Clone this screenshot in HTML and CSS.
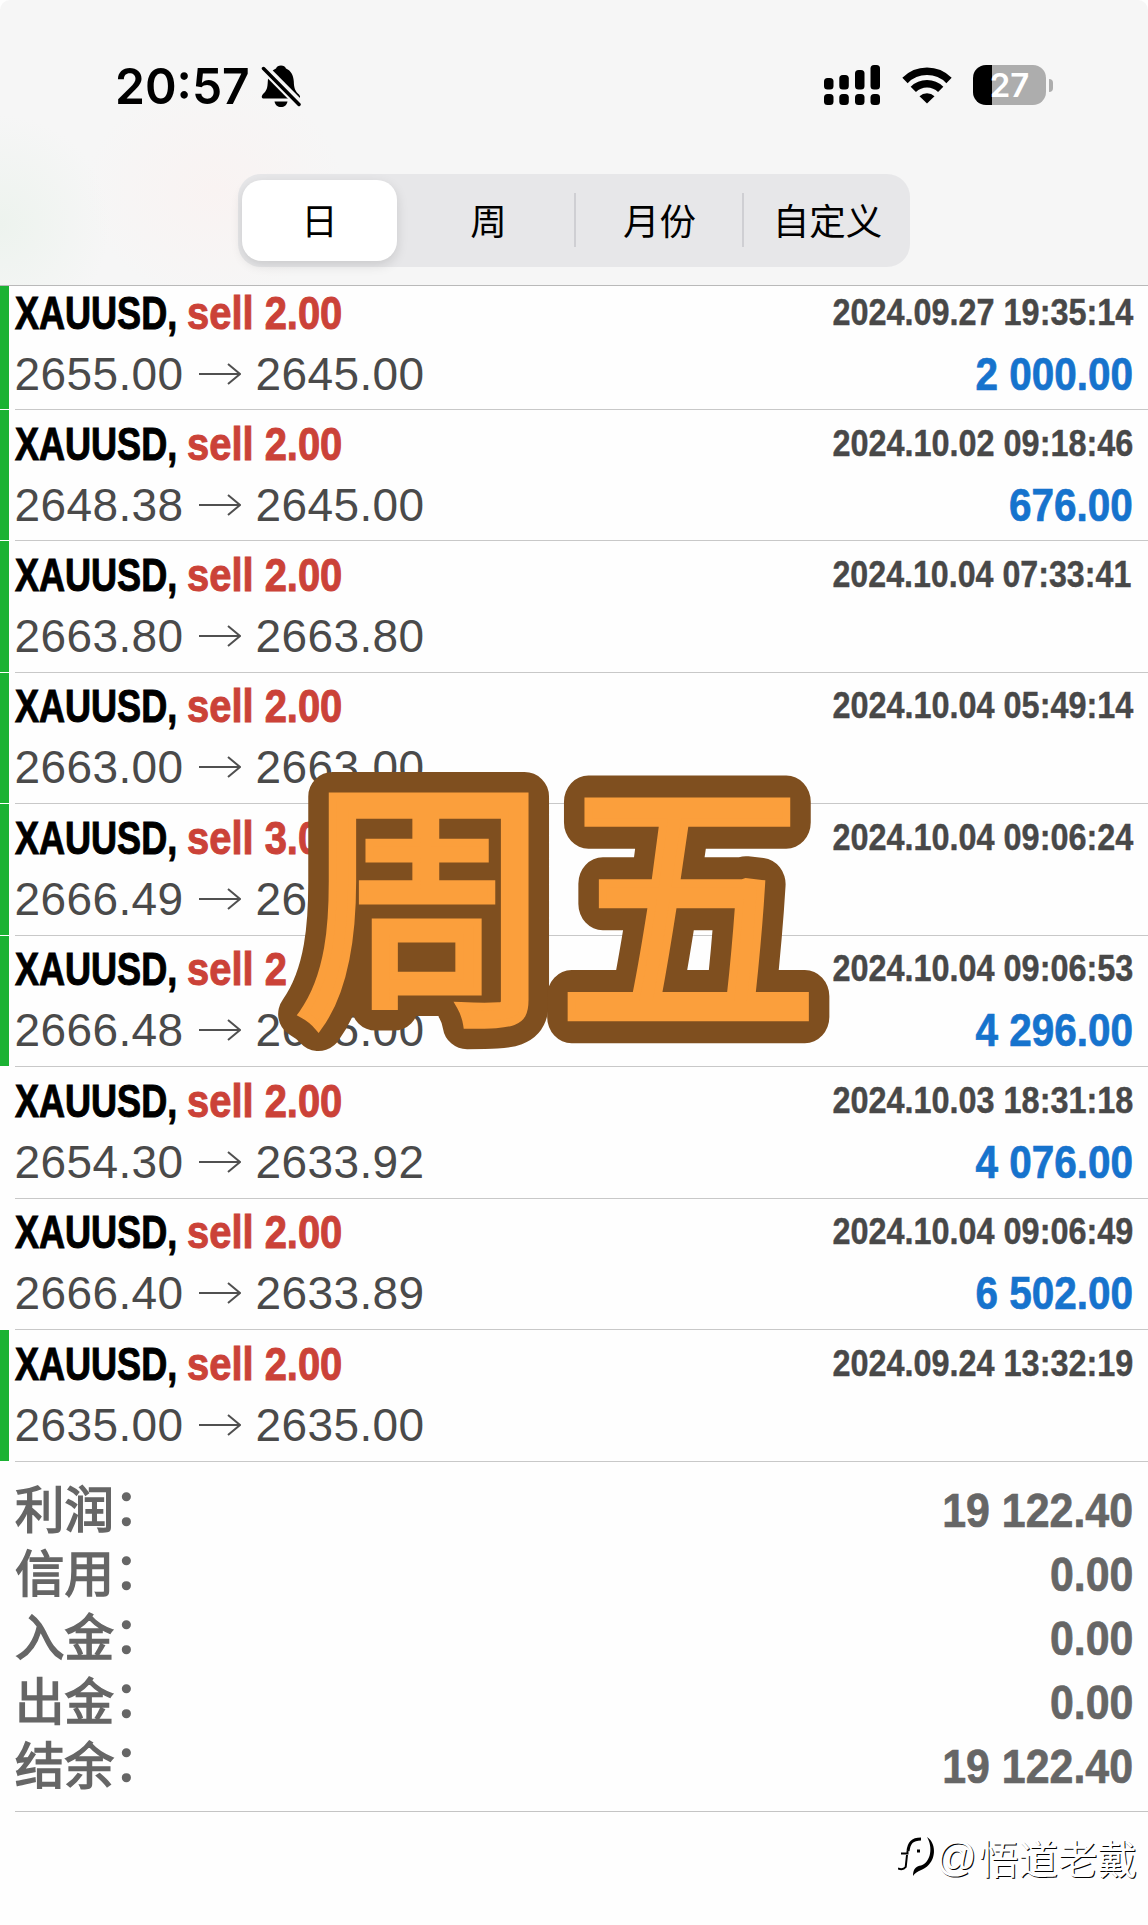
FILE: index.html
```html
<!DOCTYPE html>
<html lang="zh-CN">
<head>
<meta charset="utf-8">
<title>历史</title>
<link rel="stylesheet" href="styles.css">
</head>
<body>
<div class="screen">
  <header class="header">
    <div class="status">
      <span class="clock">20:57</span>
      <svg class="bell" width="40" height="44" viewBox="0 0 40 44">
        <path d="M20 .5C22.500 .5 24.300 1.500 25 3.500C30 5.500 32.500 10.500 32.800 16.500C33 23 34 26 38 29.500C40 32 39 33.500 37 33.500H3C.5 33.500 0 31.500 2 29C6 25.500 6.500 22.500 6.800 16.500C7.200 10.500 10 5.500 15 3.500C15.700 1.500 17.500 .5 20 .5Z"/>
        <path d="M13.500 36.500H26.500C25.500 40.500 23.500 42 20 42S14.500 40.500 13.500 36.500Z"/>
        <path class="bell-gap" d="M1 1L39 39.500"/>
        <path class="bell-slash" d="M2.500 3.500L38 39.500"/>
      </svg>
      <svg class="signal" width="56" height="40" viewBox="0 0 56 40">
        <rect x="0" y="13" width="9.500" height="11.500" rx="3.500"/><rect x="15.300" y="10" width="9.500" height="14.500" rx="3.500"/><rect x="31" y="5" width="9.500" height="19.500" rx="3.500"/><rect x="46.500" y="0" width="9.500" height="24.500" rx="3.500"/>
        <rect x="0" y="29" width="9.500" height="11" rx="3.500"/><rect x="15.300" y="29" width="9.500" height="11" rx="3.500"/><rect x="31" y="29" width="9.500" height="11" rx="3.500"/><rect x="46.500" y="29" width="9.500" height="11" rx="3.500"/>
      </svg>
      <svg class="wifi" width="50" height="37" viewBox="0 0 50 37">
        <path class="wifi-arc" d="M3 13.500A31 31 0 0 1 47 13.500"/>
        <path class="wifi-arc" d="M11.300 22.300A19.500 19.500 0 0 1 38.700 22.300"/>
        <path d="M17.500 29.200A11 11 0 0 1 32.500 29.200L25 36.500Z"/>
      </svg>
      <div class="battery"><span>27</span></div>
      <i class="battery-cap"></i>
    </div>
    <nav class="segments">
      <span class="segment active">日</span>
      <span class="segment">周</span>
      <span class="segment late">月份</span>
      <span class="segment late">自定义</span>
    </nav>
  </header>

  <main class="deals">
    <section class="deal marked first"><div class="line"><b class="symbol">XAUUSD,</b><b class="side">sell 2.00</b><time>2024.09.27 19:35:14</time></div><div class="line"><span class="price">2655.00</span><svg class="arrow" viewBox="0 0 42 22"><path d="M0 11H41M29 1L41 11L29 21"/></svg><span class="price">2645.00</span><b class="profit">2 000.00</b></div></section>
    <section class="deal marked"><div class="line"><b class="symbol">XAUUSD,</b><b class="side">sell 2.00</b><time>2024.10.02 09:18:46</time></div><div class="line"><span class="price">2648.38</span><svg class="arrow" viewBox="0 0 42 22"><path d="M0 11H41M29 1L41 11L29 21"/></svg><span class="price">2645.00</span><b class="profit">676.00</b></div></section>
    <section class="deal marked"><div class="line"><b class="symbol">XAUUSD,</b><b class="side">sell 2.00</b><time class="narrow-end">2024.10.04 07:33:41</time></div><div class="line"><span class="price">2663.80</span><svg class="arrow" viewBox="0 0 42 22"><path d="M0 11H41M29 1L41 11L29 21"/></svg><span class="price">2663.80</span></div></section>
    <section class="deal marked"><div class="line"><b class="symbol">XAUUSD,</b><b class="side">sell 2.00</b><time>2024.10.04 05:49:14</time></div><div class="line"><span class="price">2663.00</span><svg class="arrow" viewBox="0 0 42 22"><path d="M0 11H41M29 1L41 11L29 21"/></svg><span class="price">2663.00</span></div></section>
    <section class="deal marked"><div class="line"><b class="symbol">XAUUSD,</b><b class="side">sell 3.00</b><time>2024.10.04 09:06:24</time></div><div class="line"><span class="price">2666.49</span><svg class="arrow" viewBox="0 0 42 22"><path d="M0 11H41M29 1L41 11L29 21"/></svg><span class="price">26</span></div></section>
    <section class="deal marked"><div class="line"><b class="symbol">XAUUSD,</b><b class="side">sell 2</b><time>2024.10.04 09:06:53</time></div><div class="line"><span class="price">2666.48</span><svg class="arrow" viewBox="0 0 42 22"><path d="M0 11H41M29 1L41 11L29 21"/></svg><span class="price">2645.00</span><b class="profit">4 296.00</b></div></section>
    <section class="deal"><div class="line"><b class="symbol">XAUUSD,</b><b class="side">sell 2.00</b><time>2024.10.03 18:31:18</time></div><div class="line"><span class="price">2654.30</span><svg class="arrow" viewBox="0 0 42 22"><path d="M0 11H41M29 1L41 11L29 21"/></svg><span class="price">2633.92</span><b class="profit">4 076.00</b></div></section>
    <section class="deal"><div class="line"><b class="symbol">XAUUSD,</b><b class="side">sell 2.00</b><time>2024.10.04 09:06:49</time></div><div class="line"><span class="price">2666.40</span><svg class="arrow" viewBox="0 0 42 22"><path d="M0 11H41M29 1L41 11L29 21"/></svg><span class="price">2633.89</span><b class="profit">6 502.00</b></div></section>
    <section class="deal marked"><div class="line"><b class="symbol">XAUUSD,</b><b class="side">sell 2.00</b><time>2024.09.24 13:32:19</time></div><div class="line"><span class="price">2635.00</span><svg class="arrow" viewBox="0 0 42 22"><path d="M0 11H41M29 1L41 11L29 21"/></svg><span class="price">2635.00</span></div></section>
  </main>

  <dl class="summary">
    <div><dt>利润<i>：</i></dt><dd>19 122.40</dd></div>
    <div><dt>信用<i>：</i></dt><dd>0.00</dd></div>
    <div><dt>入金<i>：</i></dt><dd>0.00</dd></div>
    <div><dt>出金<i>：</i></dt><dd>0.00</dd></div>
    <div><dt>结余<i>：</i></dt><dd>19 122.40</dd></div>
  </dl>

  <footer class="credit">
    <svg width="38" height="42" viewBox="0 0 38 42">
      <path class="mark-thin" d="M0 32.500Q5 34.500 7.700 31L9 19M3 17.500H9.500V15"/>
      <path class="mark-bold" d="M10 15C11 7 14 3 23 3M19 15H22"/>
      <path d="M29 1C38 7 38 21 31 28.500C26 34.500 19 34 15 40C15 32 19 30 23 29.500C33 26 35 11 29 1Z"/>
    </svg>
    <span class="at">@</span><span>悟道老戴</span>
  </footer>

  <svg class="sticker" width="600" height="330" viewBox="0 0 600 330">
    <defs>
      <g id="friday"><text transform="translate(24 264)">周</text><text transform="translate(287 270) scale(1 1.070)">五</text></g>
    </defs>
    <use class="sticker-edge" href="#friday"/>
    <use class="sticker-face" href="#friday"/>
  </svg>
</div>
</body>
</html>
```
FILE: styles.css
```css
* { box-sizing: border-box; }
body { margin: 0; background: #fff; font-family: "Liberation Sans", "Noto Sans CJK SC", sans-serif; }
.screen { position: relative; width: 1148px; height: 1925px; overflow: hidden; background: #fefefe; }

.header {
  height: 286px;
  border-bottom: 1px solid #b9b9b9;
  border-radius: 10px 10px 0 0;
  background:
    radial-gradient(ellipse 110px 110px at 0 225px, #edf3ee 0, transparent 100%),
    radial-gradient(ellipse 130px 110px at 215px 190px, #f9f3f2 0, transparent 100%),
    #f6f6f6;
}
.status { display: flex; height: 174px; padding: 65px 0 0 115px; align-items: flex-start; }
.clock {
  width: 146px;
  font: 600 50px/42px Inter, sans-serif;
  transform: scaleX(.96);
  transform-origin: left;
}
.bell-gap { stroke: #f6f6f6; stroke-width: 9; }
.bell-slash { stroke: #000; stroke-width: 3.500; stroke-linecap: round; }
.signal { margin-left: 523px; }
.wifi { margin: 2px 0 0 22px; }
.wifi-arc { fill: none; stroke: #000; stroke-width: 7.500; }
.battery {
  width: 73px;
  height: 40px;
  margin-left: 21px;
  border-radius: 13px;
  background: linear-gradient(90deg, #000 19px, #adadad 19px);
  color: #fff;
  font: 600 33px/41px Inter, sans-serif;
  text-align: center;
}
.battery-cap { width: 4px; height: 13px; margin: 14px 0 0 3px; border-radius: 0 5px 5px 0; background: #adadad; }

.segments {
  display: grid;
  grid-template-columns: repeat(4, 168px);
  width: 672px;
  height: 93px;
  margin: 0 0 0 238px;
  border-radius: 23px;
  background: #e7e7e9;
}
.segment {
  display: flex;
  align-items: center;
  justify-content: center;
  padding: 0 3px 0 0;
  font: 400 36.500px/1 "Noto Sans CJK SC", sans-serif;
}
.late {
  padding: 0 0 0 3px;
  background: linear-gradient(#cfcfd3, #cfcfd3) 0 19px / 2px 54px no-repeat;
}
.active {
  margin: 6px 9px 6px 4px;
  padding: 0;
  border-radius: 20px;
  background: #fff;
  box-shadow: 0 4px 12px rgba(0, 0, 0, .13);
}

.deal {
  height: 131.46px;
  padding: 7px 0 0 15px;
  border-bottom: 1px solid transparent;
  background: linear-gradient(#c8c8c8, #c8c8c8) 15px 100% / 100% 1px no-repeat border-box;
}
.marked {
  background:
    linear-gradient(#c8c8c8, #c8c8c8) 15px 100% / 100% 1px no-repeat border-box,
    linear-gradient(#1bb233, #1bb233) 0 0 / 9px 100% no-repeat padding-box;
}
.first { height: 124px; padding-top: 0; }
.line { display: flex; height: 69px; align-items: center; padding-right: 15px; white-space: nowrap; }
.line:first-child { height: 53px; }
.symbol, .side { font-size: 46.500px; transform-origin: left; -webkit-text-stroke: 1px currentColor; }
.symbol { width: 172px; transform: scaleX(.775); }
.side { width: 160px; color: #cb4238; transform: scaleX(.858); }
time { margin-left: auto; font-size: 36px; font-weight: 700; color: #484848; transform: scaleX(.9); transform-origin: right; -webkit-text-stroke: .4px currentColor; }
.narrow-end { transform: translateX(-2px) scaleX(.894); }
.price { width: 184px; font-size: 46px; letter-spacing: .4px; color: #4a4a4a; transform: translateX(-.5px); }
.arrow { width: 42px; height: 22px; margin-right: 15px; fill: none; stroke: #505050; stroke-width: 2; }
.profit { margin-left: auto; font-size: 46px; color: #1673cd; transform: scaleX(.88); transform-origin: right; -webkit-text-stroke: .7px currentColor; }

.summary { height: 350px; margin: 0 0 0 15px; padding: 16px 15px 0 0; border-bottom: 1px solid #c4c4c4; }
.summary div { display: flex; height: 64.200px; align-items: center; justify-content: space-between; }
dt {
  margin-top: -6px;
  font: 400 49.500px/64px "Noto Sans CJK SC", sans-serif;
  color: #666;
  -webkit-text-stroke: 1.600px currentColor;
}
dt i { display: inline-block; font-style: normal; transform: translate(0, -3px); }
dd { margin: 0; font-size: 49px; font-weight: 700; color: #666; transform: scaleX(.875); transform-origin: right; -webkit-text-stroke: .7px currentColor; }

.credit { display: flex; justify-content: flex-end; align-items: center; height: 91px; padding-right: 11px; font: 400 39.500px/1 "Noto Sans CJK SC", sans-serif; color: #fff; text-shadow: 1px 1px 0 #000; }
.at { width: 43px; font-family: "Liberation Sans", sans-serif; font-size: 40px; }
.mark-thin { fill: none; stroke: #000; stroke-width: 2; }
.mark-bold { fill: none; stroke: #000; stroke-width: 3; }

.sticker { position: absolute; left: 270px; top: 740px; }
.sticker text { font: 400 262px "Noto Sans CJK JP", sans-serif; }
.sticker-edge { fill: #7f4f1f; stroke: #7f4f1f; stroke-width: 49px; stroke-linejoin: round; }
.sticker-face { fill: #fb9f3c; stroke: #fb9f3c; stroke-width: 8px; stroke-linejoin: miter; }
```
